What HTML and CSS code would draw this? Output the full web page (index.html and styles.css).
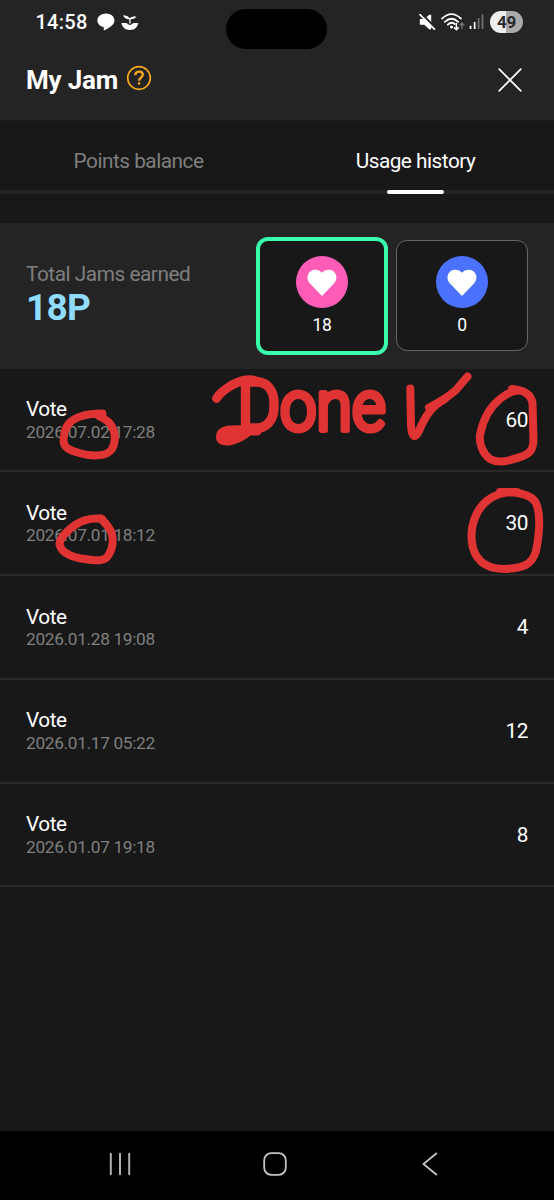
FILE: index.html
```html
<!DOCTYPE html>
<html lang="en">
<head>
<meta charset="utf-8">
<title>My Jam</title>
<link rel="stylesheet" href="styles.css">
</head>
<body>
<div class="screen">
  <header class="header">
    <div class="status">
      <div class="status-left">
        <span class="clock">14:58</span>
        <svg class="chat-icon" width="18" height="18" viewBox="0 0 18 18" fill="#fff"><path d="M9 .4C4 .4.4 3.300.4 7.400c0 3.400 2.400 5.700 6.300 6.600v2.700c0 .6.6.8 1.100.4C13 14.300 17.400 11.600 17.400 7.400 17.400 3.300 14 .4 9 .4Z"/></svg>
        <svg class="plant-icon" width="18" height="18" viewBox="0 0 18 18" fill="#fff"><path d="M.5 10h4.700L9 12.300l3.500-2.300h4.700c-.5 4.200-3.600 7-8.300 7S.9 14.200.5 10Z"/><path d="M2 2.300c3 0 5.200.7 6.500 2.900C9.900 3.900 12.300 3.300 15.300 3.500 14.500 5.300 12.600 6.200 9.600 6.300V10.500H8.300V6.400C5.300 6.300 3 4.900 2 2.300Z"/></svg>
      </div>
      <div class="status-right">
        <svg class="mute-icon" width="18" height="18" viewBox="0 0 18 18"><path d="M1.200 6h4L10 2q1.800-1.300 2.200.6v13q-.5 1.600-2.200.3L5.200 11.800h-4Q.8 11.800.8 11V6.800Q.8 6 1.200 6Z" fill="#fff"/><path d="M2.300.5 17 15.600" stroke="#242424" stroke-width="2.200"/><path d="M1 1.600 15.400 16.200" stroke="#fff" stroke-width="1.700" stroke-linecap="round"/></svg>
        <svg class="wifi-icon" width="24" height="18" viewBox="0 0 24 18" fill="none" stroke="#fff" stroke-width="1.800" stroke-linecap="round"><path d="M1.100 5.500Q10.500-3.300 19.900 5.500M3.800 8.800Q10.500 2.600 17.200 8.800M6.800 11.600Q10.500 8.300 13.800 11"/><circle cx="10.500" cy="14" r="1.500" fill="#fff" stroke="none"/><path d="M15.400 10.500v6M13.400 14.800l2 2 2-2" stroke-width="1.500"/><path d="M20.900 15.500v-5M19 12l1.900-2 1.900 2" stroke="#777" stroke-width="1.300"/></svg>
        <svg class="signal-icon" width="15" height="16" viewBox="0 0 15 16"><path d="M.7 11.800h1.700V15H.7zM4.800 8h1.700v7H4.800z" fill="#fff"/><path d="M8.700 4h1.800v11H8.700zM12.600.5h1.800V15h-1.800z" fill="#707070"/></svg>
        <span class="battery">49</span>
      </div>
      <div class="camera"></div>
    </div>
    <div class="title-bar">
      <h1 class="title">My Jam</h1>
      <svg class="help-icon" width="26" height="26" viewBox="0 0 26 26" fill="none" stroke="#f5a81c"><circle cx="13" cy="13" r="11.300" stroke-width="1.700"/><path d="M9.300 10.200C9.400 7.800 10.900 6.700 13.100 6.700c2.200 0 3.700 1.200 3.700 3.100 0 2.800-3.700 2.700-3.700 5.900" stroke-width="2.300"/><path d="M11.900 17.300h2.400v2.300h-2.400z" fill="#f5a81c" stroke="none"/></svg>
      <svg class="close-icon" width="24" height="24" viewBox="0 0 24 24" stroke="#fff" stroke-width="1.700" stroke-linecap="round"><path d="M1.200 1.200 22.800 22.800M22.800 1.200 1.200 22.800"/></svg>
    </div>
  </header>
  <nav class="tabs">
    <div class="tab">Points balance</div>
    <div class="tab active">Usage history</div>
  </nav>
  <section class="summary">
    <div class="total">
      <div class="total-label">Total Jams earned</div>
      <div class="total-value">18P</div>
    </div>
    <div class="card selected">
      <svg width="52" height="52" viewBox="0 0 52 52"><circle cx="26" cy="26" r="26" fill="#ff5cb8"/><path d="M26 40 14.200 27.800C8.500 21.600 12.800 13.800 19.200 13.800c3 0 5.200 1.200 6.800 3 1.600-1.800 3.800-3 6.800-3 6.400 0 10.700 7.800 5 14Z" fill="#fff"/></svg>
      <span>18</span>
    </div>
    <div class="card">
      <svg width="52" height="52" viewBox="0 0 52 52"><circle cx="26" cy="26" r="26" fill="#4a72ff"/><path d="M26 40 14.200 27.800C8.500 21.600 12.800 13.800 19.200 13.800c3 0 5.200 1.200 6.800 3 1.600-1.800 3.800-3 6.800-3 6.400 0 10.700 7.800 5 14Z" fill="#fff"/></svg>
      <span>0</span>
    </div>
  </section>
  <main class="history">
    <div class="row"><div><div class="name">Vote</div><div class="date">2026.07.02 17:28</div></div><div class="amount">60</div></div>
    <div class="row"><div><div class="name">Vote</div><div class="date">2026.07.01 18:12</div></div><div class="amount">30</div></div>
    <div class="row"><div><div class="name">Vote</div><div class="date">2026.01.28 19:08</div></div><div class="amount">4</div></div>
    <div class="row"><div><div class="name">Vote</div><div class="date">2026.01.17 05:22</div></div><div class="amount">12</div></div>
    <div class="row"><div><div class="name">Vote</div><div class="date">2026.01.07 19:18</div></div><div class="amount">8</div></div>
  </main>
  <footer class="navbar">
    <svg width="22" height="24" viewBox="0 0 22 24" stroke="#b8b8b8" stroke-width="1.900"><path d="M1.800 1v22M11 1v22M20.200 1v22"/></svg>
    <svg class="home-icon" width="24" height="24" viewBox="0 0 24 24" fill="none" stroke="#c4c4c4" stroke-width="1.800"><rect x="1.200" y="1.200" width="21.600" height="21.600" rx="7"/></svg>
    <svg width="16" height="24" viewBox="0 0 16 24" fill="none" stroke="#c4c4c4" stroke-width="1.800"><path d="M14.800 1 1.500 12l13.300 11"/></svg>
  </footer>
  <svg class="ink" width="554" height="1200" viewBox="0 0 554 1200">
    <path d="M102.500 413.500C95 413.500 88 414 82 416C71 419 65 426 64 436C62 445 66 449 76 452C91 457 107 457 112 449C117 440 115 429 109 422.500Q104 418 99 416"/>
    <path d="M102 519C91 517.500 83 520 75 525C67 531 60 538 59.500 544C61 552 68 556 81 558.500C96 561 105 562 108.500 555C115 545 113 533 109 528Q105 522 100.500 518.500"/>
    <path d="M512 389C524 390 531 394 532.500 403L533.500 440C533 449 531 453 522 456.500C508 461 499 464 490 459C483 454 479 444 480 435C483 419 490 407 500 399C506 394 512 391 518 390.500"/>
    <path d="M500 492H517M501 493C511 491 531 493 536 503C541 515 539 536 536 551C532 565 523 568 505 569C487 569 477 562 473 548C468 528 476 509 488 500C497 493 512 490 522 494"/>
    <path class="check" d="M410.300 388.500L411 425C411.500 437 415 439.500 419 431C425 416 432 406 445 399"/>
    <path class="check" d="M429 407.500C442 401 449 396 456 390Q461 384 467.500 376.500"/>
    <path class="swash" d="M216.500 398.500C221 391 234 382 246 380Q253 379 259 382"/>
    <path class="swash loop" d="M257 430.500C240 431 221 427 221 437C221 444 238 440 248 431"/>
    <text class="note" transform="scale(.92 1)" y="430.500" x="258.500 304.500 344 383">Done</text>
  </svg>
</div>
</body>
</html>
```
FILE: styles.css
```css
* { box-sizing: border-box; }
body { margin: 0; background: #181818; font-family: Roboto, "Liberation Sans", sans-serif; color: #fff; }
svg { display: block; flex: none; }
.screen { position: relative; width: 554px; height: 1200px; display: flex; flex-direction: column; background: #181818; overflow: hidden; }
.header { height: 121px; background: #242424; flex: none; border-bottom: 1px solid #1e1d1e; }
.status { position: relative; height: 44px; display: flex; justify-content: space-between; padding: 0 31px 0 35.500px; }
.status-left, .status-right { display: flex; align-items: center; height: 43px; }
.clock { font-size: 20px; font-weight: 500; letter-spacing: .25px; margin-right: 9px; }
.plant-icon { margin-left: 6px; }
.mute-icon { margin-top: 1px; }
.wifi-icon { margin: 0 4px 0 4px; }
.signal-icon { margin-right: 6px; }
.battery { width: 33px; height: 22px; border-radius: 11px; background: linear-gradient(90deg, #eee 49%, #aaa 49%); color: #292929; font: 700 17px/22px Roboto, sans-serif; letter-spacing: -.2px; text-align: center; }
.camera { position: absolute; left: 226px; top: 9px; width: 101px; height: 40px; border-radius: 20px; background: #000; }
.title-bar { height: 72px; display: flex; align-items: center; padding: 0 32px 0 26px; }
.title { margin: 0; font-size: 26px; font-weight: 700; line-height: 32px; letter-spacing: -.2px; }
.help-icon { margin: -4px 0 0 7.500px; }
.close-icon { margin-left: auto; }
.tabs { position: relative; height: 72.500px; flex: none; display: flex; border-bottom: 4px solid #242424; }
.tab { position: relative; width: 277px; text-align: center; font-size: 20.800px; line-height: 81px; letter-spacing: -.5px; color: #7f7f7f; }
.tab.active { color: #fff; }
.tab.active::after { content: ""; position: absolute; left: 110px; bottom: -4px; width: 57px; height: 4px; border-radius: 2px; background: #fff; }
.summary { height: 146px; flex: none; margin-top: 29px; padding: 0 26px; background: #242424; display: flex; align-items: center; gap: 8px; }
.total { flex: 1; padding-bottom: 2px; }
.total-label { font-size: 20.800px; line-height: 27px; letter-spacing: -.46px; color: #7f7f7f; }
.total-value { font-size: 37px; line-height: 40px; font-weight: 700; letter-spacing: -.7px; color: #8fdcff; }
.card { width: 132px; height: 111px; border: 1px solid #666; border-radius: 11px; background: #181818; display: flex; flex-direction: column; align-items: center; justify-content: center; gap: 7px; font-size: 17.500px; line-height: 20px; letter-spacing: -.4px; }
.card.selected { height: 118px; border: 4px solid #39ffad; border-radius: 12px; }
.history { padding-top: .2px; }
.row { height: 103.750px; display: flex; align-items: center; justify-content: space-between; padding: 0 26px; border-bottom: 2px solid #292929; }
.name { font-size: 20.800px; line-height: 24px; letter-spacing: -.5px; padding-top: .6px; }
.date { font-size: 17.300px; line-height: 21px; letter-spacing: -.33px; padding-top: .4px; color: #7f7f7f; }
.amount { font-size: 20.800px; line-height: 24px; letter-spacing: -.4px; }
.navbar { height: 69px; margin-top: auto; background: #000; display: flex; justify-content: space-between; align-items: center; padding: 0 116px 3px 109px; }
.home-icon { margin-right: 4px; }
.ink { position: absolute; left: 0; top: 0; fill: none; stroke: #e03434; stroke-width: 8; stroke-linecap: round; stroke-linejoin: round; }
.check { stroke-width: 8px; }
.swash { stroke-width: 9px; }
.loop { stroke-width: 10px; }
.note { font: 300 70px Roboto, sans-serif; fill: #e03434; stroke-width: 6px; }
```
